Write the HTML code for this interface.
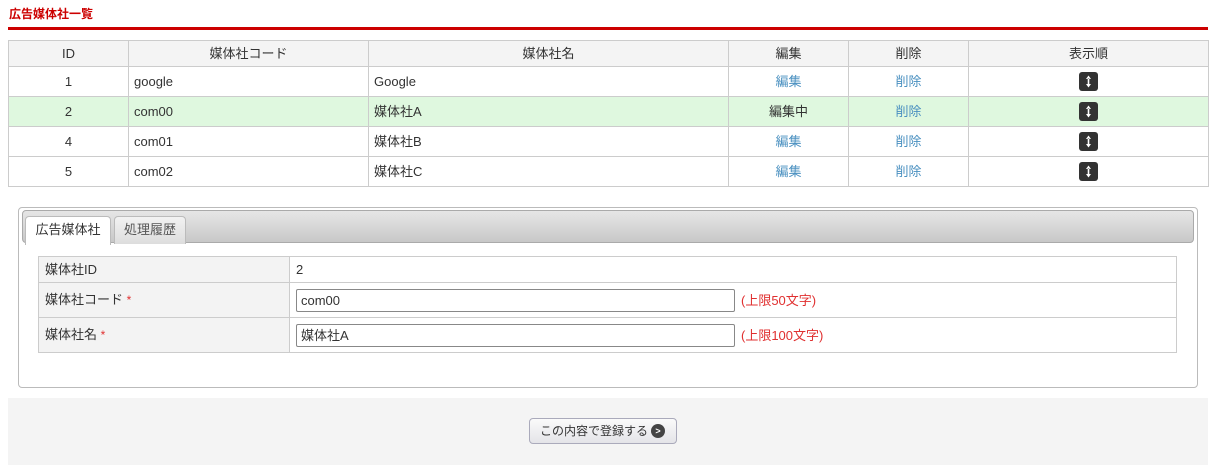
<!DOCTYPE html>
<html><head><meta charset="utf-8"><style>
body{margin:0;width:1215px;height:474px;background:#fff;font-family:"Liberation Sans","Noto Sans CJK JP",sans-serif;font-size:13px;color:#333;position:relative;overflow:hidden}
.a{position:absolute}
.title{left:9px;top:6px;color:#c00;font-weight:bold;font-size:12px;line-height:16px}
.line{left:8px;top:27px;width:1200px;height:3px;background:#c00}
table{border-collapse:collapse;position:absolute}
td{line-height:15px}
.t td{border:1px solid #ccc;height:29px;padding:0 5px;font-size:13px}
.t tr.h td{background:#f4f4f4;text-align:center;height:25px}
.c{text-align:center}
.lk{color:#4a90c0}
.ic{display:inline-block;width:19px;height:19px;background:#333;border-radius:3px;vertical-align:middle}
.panel{left:18px;top:207px;width:1178px;height:179px;border:1px solid #bbb;border-radius:4px}
.bar{left:22px;top:210px;width:1172px;height:33px;border:1px solid #aaa;border-radius:4px;background:linear-gradient(#e6e6e6,#c8c8c8);box-sizing:border-box}
.tab{top:216px;height:28px;border:1px solid #bbb;border-bottom:none;border-radius:4px 4px 0 0;line-height:26px;text-align:center;font-size:13px;box-sizing:border-box}
.f td{border:1px solid #ccc;padding:0 6px;font-size:13px}
.f td.l{background:#f3f3f3;width:238px}
.inp{display:inline-block;width:439px;height:23px;border:1px solid #888;border-radius:2px;box-sizing:border-box;line-height:21px;padding-left:4px;vertical-align:middle}
.red{color:#e03030;margin-left:6px;vertical-align:middle}
.st{color:#e03030;font-size:12px}
.foot{left:8px;top:398px;width:1200px;height:67px;background:#f4f4f4}
.btn{left:529px;top:418px;width:148px;height:26px;border:1px solid #aab;border-radius:4px;background:linear-gradient(#fafafa,#e4e4e8);box-sizing:border-box;font-size:12px;line-height:24px;padding-left:10px;color:#333;white-space:nowrap}
.btn i{position:absolute;left:121px;top:5px;width:14px;height:14px;border-radius:50%;background:#444;color:#fff;font-size:9px;font-style:normal;line-height:14px;text-align:center;font-weight:bold}
</style></head><body>
<div class="a title">広告媒体社一覧</div>
<div class="a line"></div>
<table class="t" style="left:8px;top:40px;width:1201px">
<tr class="h"><td style="width:109px">ID</td><td style="width:229px">媒体社コード</td><td style="width:349px">媒体社名</td><td style="width:109px">編集</td><td style="width:109px">削除</td><td>表示順</td></tr>
<tr><td class="c">1</td><td>google</td><td>Google</td><td class="c lk">編集</td><td class="c lk">削除</td><td class="c"><svg class="ic" viewBox="0 0 19 19"><path d="M9.5 3.5L7 7h5zM9.5 15.5L7 12h5z M8.7 6.5h1.6v6H8.7z" fill="#fff"/></svg></td></tr>
<tr style="background:#dff8df"><td class="c">2</td><td>com00</td><td>媒体社A</td><td class="c">編集中</td><td class="c lk">削除</td><td class="c"><svg class="ic" viewBox="0 0 19 19"><path d="M9.5 3.5L7 7h5zM9.5 15.5L7 12h5z M8.7 6.5h1.6v6H8.7z" fill="#fff"/></svg></td></tr>
<tr><td class="c">4</td><td>com01</td><td>媒体社B</td><td class="c lk">編集</td><td class="c lk">削除</td><td class="c"><svg class="ic" viewBox="0 0 19 19"><path d="M9.5 3.5L7 7h5zM9.5 15.5L7 12h5z M8.7 6.5h1.6v6H8.7z" fill="#fff"/></svg></td></tr>
<tr><td class="c">5</td><td>com02</td><td>媒体社C</td><td class="c lk">編集</td><td class="c lk">削除</td><td class="c"><svg class="ic" viewBox="0 0 19 19"><path d="M9.5 3.5L7 7h5zM9.5 15.5L7 12h5z M8.7 6.5h1.6v6H8.7z" fill="#fff"/></svg></td></tr>
</table>
<div class="a panel"></div>
<div class="a bar"></div>
<div class="a tab" style="left:25px;width:86px;background:#fff;height:29px">広告媒体社</div>
<div class="a tab" style="left:114px;width:72px;background:linear-gradient(#f2f2f2,#ddd);color:#555">処理履歴</div>
<table class="f" style="left:38px;top:256px;width:1139px">
<tr style="height:26px"><td class="l">媒体社ID</td><td>2</td></tr>
<tr style="height:35px"><td class="l">媒体社コード <span class="st">*</span></td><td><span class="inp">com00</span><span class="red">(上限50文字)</span></td></tr>
<tr style="height:35px"><td class="l">媒体社名 <span class="st">*</span></td><td><span class="inp">媒体社A</span><span class="red">(上限100文字)</span></td></tr>
</table>
<div class="a foot"></div>
<div class="a btn">この内容で登録する<i>&gt;</i></div>
</body></html>
